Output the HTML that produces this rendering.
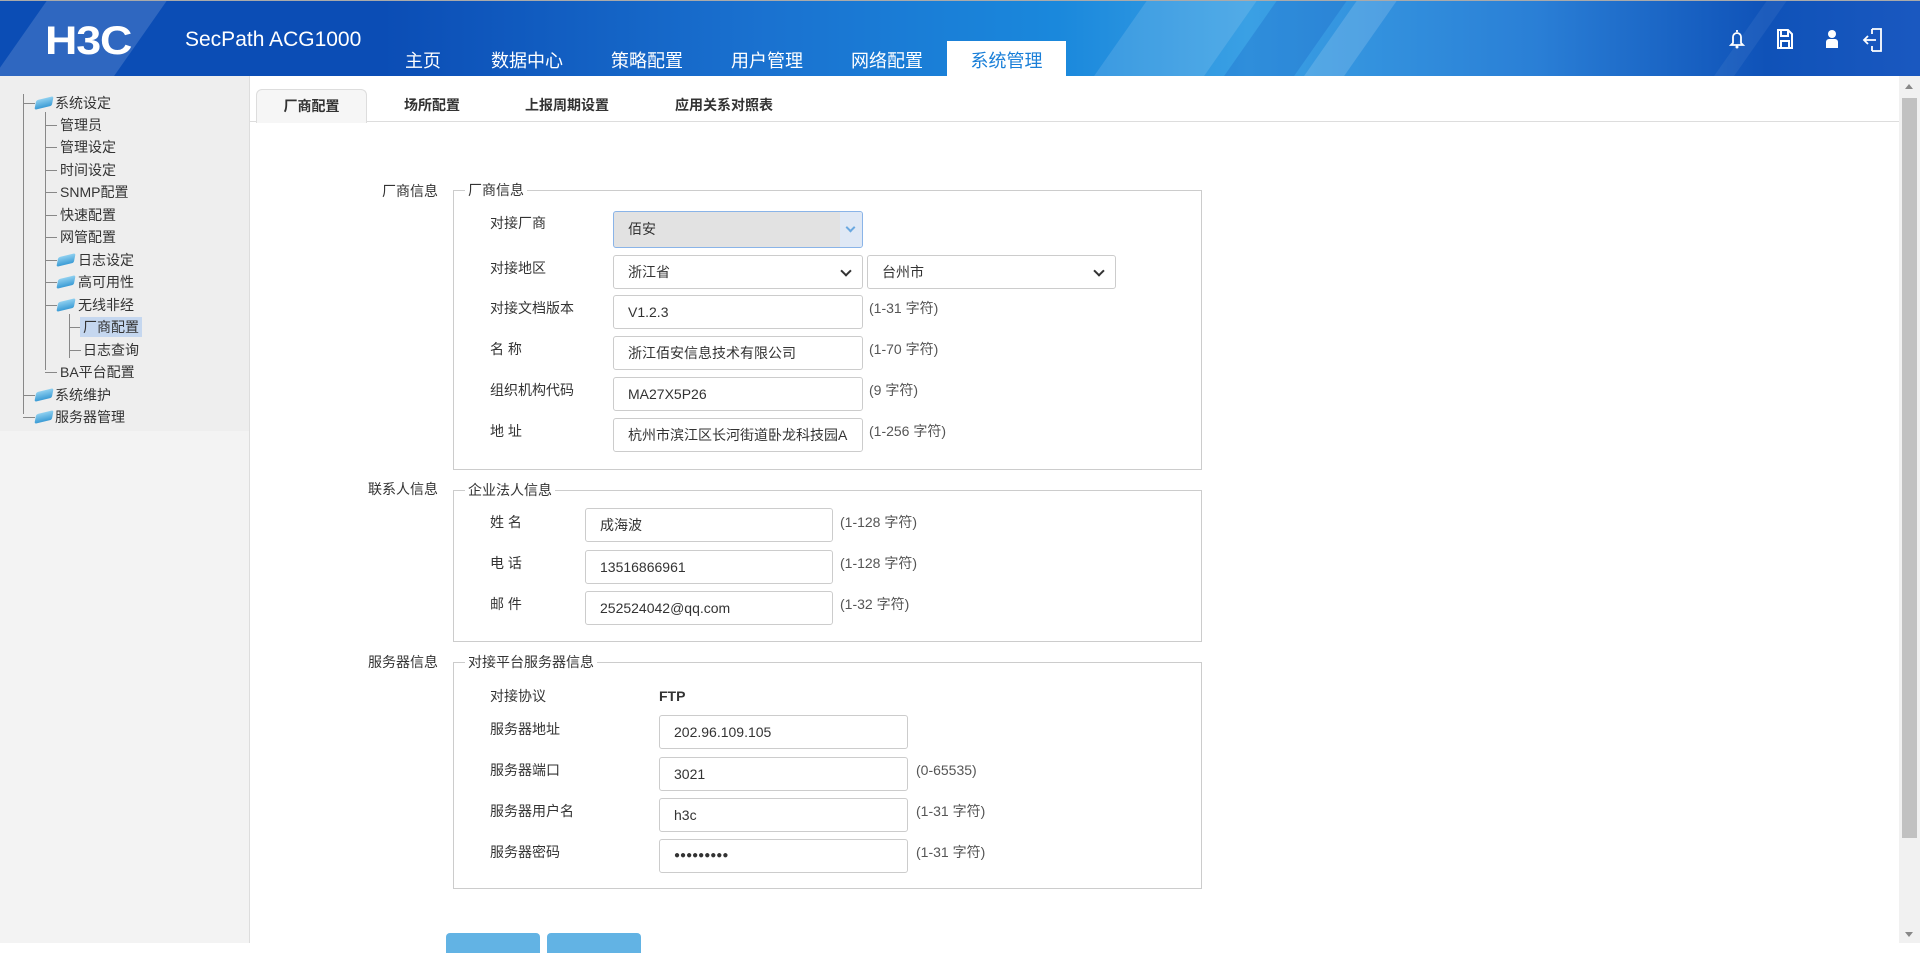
<!DOCTYPE html>
<html><head><meta charset="utf-8">
<style>
*{box-sizing:border-box;margin:0;padding:0}
body{width:1920px;height:943px;overflow:hidden;position:relative;background:#fff;font-family:"Liberation Sans","Noto Sans CJK SC",sans-serif;color:#333;font-size:14px}
.hdr{position:absolute;left:0;top:0;width:1920px;height:76px;border-top:1px solid #aaa;
background:linear-gradient(90deg,#0b4db5 0%,#0b4db5 20%,#1a72d0 40%,#1a88dc 55%,#3aa0e4 65%,#2a7fd6 80%,#0f52b8 92%,#1a58c0 100%);overflow:hidden}
.stripe{position:absolute;top:0;height:76px;transform:skewX(-35deg);background:rgba(255,255,255,.12)}
.logo{position:absolute;left:45px;top:20px;color:#fff;font:bold 40px "Liberation Sans",sans-serif;letter-spacing:-1px;transform:scaleX(1.12);transform-origin:left;line-height:40px}
.prod{position:absolute;left:185px;top:27px;color:#fff;font-size:21px}
.nav{position:absolute;top:46px;color:#fff;font-size:18px}
.act{position:absolute;left:947px;top:40px;width:119px;height:36px;background:#fff;color:#1a7fd8;font-size:18px;text-align:center;line-height:36px;padding-top:2px}
.ic{position:absolute;top:27px}
.side{position:absolute;left:0;top:76px;width:250px;height:867px;background:#f3f3f3;border-right:1px solid #ddd}
.side .top{position:absolute;left:0;top:0;width:249px;height:355px;background:#eeeeee}
.ti{position:absolute;font-size:14px;color:#333;line-height:18px;white-space:nowrap}
.vl{position:absolute;border-left:1px solid #888}
.hl{position:absolute;border-top:1px solid #888;width:12px}
.fold{position:absolute;width:16px;height:10px;background:linear-gradient(#8fd0f0,#3a9bd5);border-radius:2px;transform:skewX(-25deg) rotate(-15deg)}
.tabs{position:absolute;left:250px;top:89px;width:1649px;height:33px;border-bottom:1px solid #ddd}
.tab{position:absolute;top:0;height:33px;line-height:33px;font-weight:bold;font-size:14px;color:#333;text-align:center}
.tab.on{background:#f6f6f6;border:1px solid #ddd;border-bottom:none;border-radius:6px 6px 0 0;height:34px}
.fs{position:absolute;left:453px;width:749px;border:1px solid #ccc}
.lg{position:absolute;background:#fff;padding:0 3px;font-size:14px;top:-10px;left:11px;line-height:18px}
.ll{position:absolute;font-size:14px;line-height:18px;text-align:right;width:120px}
.lab{position:absolute;font-size:14px;line-height:18px}
.in{position:absolute;height:34px;border:1px solid #ccc;border-radius:3px;background:#fff;font-size:14px;line-height:32px;padding-left:14px;color:#333;white-space:nowrap;overflow:hidden}
.hint{position:absolute;font-size:14px;line-height:18px;color:#555}
.sel::after{content:"";position:absolute;right:12px;top:11px;width:6px;height:6px;border-right:2px solid #333;border-bottom:2px solid #333;transform:rotate(45deg)}
.sb{position:absolute;left:1899px;top:76px;width:21px;height:867px;background:#f1f1f1}
.btn{position:absolute;top:933px;height:20px;width:94px;background:#62b3e4;border-radius:4px 4px 0 0}
</style></head><body>
<div class="hdr">
<div class="stripe" style="left:20px;width:120px;background:rgba(255,255,255,.15)"></div>
<div class="stripe" style="left:1120px;width:110px;background:rgba(255,255,255,.12)"></div>
<div class="stripe" style="left:1250px;width:70px;background:rgba(0,60,180,.18)"></div>
<div class="stripe" style="left:1330px;width:40px;background:rgba(255,255,255,.15)"></div>
<div class="stripe" style="left:1740px;width:20px;background:rgba(255,255,255,.06)"></div>
<div class="logo">H3C</div>
<div class="prod">SecPath ACG1000</div>
<div class="nav" style="left:405px">主页</div>
<div class="nav" style="left:491px">数据中心</div>
<div class="nav" style="left:611px">策略配置</div>
<div class="nav" style="left:731px">用户管理</div>
<div class="nav" style="left:851px">网络配置</div>
<div class="act">系统管理</div>
<svg class="ic" style="left:1728px" width="18" height="22" viewBox="0 0 18 22"><path d="M9 2v2M5 15V9a4 4 0 0 1 8 0v6l2 2H3z" fill="none" stroke="#fff" stroke-width="1.8"/><circle cx="9" cy="19" r="1.5" fill="#fff"/></svg>
<svg class="ic" style="left:1776px" width="18" height="22" viewBox="0 0 18 22"><path d="M2 2h10l4 4v14H2z M5 2v6h7V2 M5 20v-7h8v7" fill="none" stroke="#fff" stroke-width="2"/></svg>
<svg class="ic" style="left:1823px" width="18" height="22" viewBox="0 0 18 22"><circle cx="9" cy="6" r="4" fill="#fff"/><path d="M3 20v-6a3 3 0 0 1 3-3h6a3 3 0 0 1 3 3v6z" fill="#fff"/></svg>
<svg class="ic" style="left:1862px" width="22" height="24" viewBox="0 0 22 24"><path d="M10 1h9v22h-9M10 1v5M10 23v-5M14 12H2M6 8l-4 4 4 4" fill="none" stroke="#fff" stroke-width="1.8"/></svg>
</div>

<div class="side"><div class="top"></div>
<div class="vl" style="left:23px;top:18px;height:320px"></div>
<div class="vl" style="left:45px;top:36px;height:258px"></div>
<div class="vl" style="left:69px;top:238px;height:44px"></div>
</div>
<div class="hl" style="left:23px;top:103px"></div><div class="fold" style="left:36px;top:98px"></div><div class="ti" style="left:55px;top:94px">系统设定</div>
<div class="hl" style="left:45px;top:125px"></div><div class="ti" style="left:60px;top:116px">管理员</div>
<div class="hl" style="left:45px;top:147px"></div><div class="ti" style="left:60px;top:138px">管理设定</div>
<div class="hl" style="left:45px;top:170px"></div><div class="ti" style="left:60px;top:161px">时间设定</div>
<div class="hl" style="left:45px;top:192px"></div><div class="ti" style="left:60px;top:183px">SNMP配置</div>
<div class="hl" style="left:45px;top:215px"></div><div class="ti" style="left:60px;top:206px">快速配置</div>
<div class="hl" style="left:45px;top:237px"></div><div class="ti" style="left:60px;top:228px">网管配置</div>
<div class="hl" style="left:45px;top:260px"></div><div class="fold" style="left:58px;top:255px"></div><div class="ti" style="left:78px;top:251px">日志设定</div>
<div class="hl" style="left:45px;top:282px"></div><div class="fold" style="left:58px;top:277px"></div><div class="ti" style="left:78px;top:273px">高可用性</div>
<div class="hl" style="left:45px;top:305px"></div><div class="fold" style="left:58px;top:300px"></div><div class="ti" style="left:78px;top:296px">无线非经</div>
<div class="hl" style="left:69px;top:327px"></div><div class="ti" style="left:80px;top:317px;background:#c5d7ef;padding:1px 3px">厂商配置</div>
<div class="hl" style="left:69px;top:350px"></div><div class="ti" style="left:83px;top:341px">日志查询</div>
<div class="hl" style="left:45px;top:372px"></div><div class="ti" style="left:60px;top:363px">BA平台配置</div>
<div class="hl" style="left:23px;top:395px"></div><div class="fold" style="left:36px;top:390px"></div><div class="ti" style="left:55px;top:386px">系统维护</div>
<div class="hl" style="left:23px;top:417px"></div><div class="fold" style="left:36px;top:412px"></div><div class="ti" style="left:55px;top:408px">服务器管理</div>

<div class="tabs">
<div class="tab on" style="left:6px;width:111px">厂商配置</div>
<div class="tab" style="left:132px;width:100px">场所配置</div>
<div class="tab" style="left:262px;width:110px">上报周期设置</div>
<div class="tab" style="left:412px;width:124px">应用关系对照表</div>
</div>

<div class="ll" style="left:318px;top:182px">厂商信息</div>
<div class="fs" style="top:190px;height:280px"><div class="lg">厂商信息</div></div>
<div class="lab" style="left:490px;top:214px">对接厂商</div>
<div class="in" style="left:613px;top:211px;width:250px;height:37px;background:#e2e2e2;border-color:#8ab4e8;line-height:35px">佰安<span style="position:absolute;right:0;top:0;width:22px;height:35px;background:#dfe8f5"></span><span style="position:absolute;right:8px;top:12px;width:7px;height:7px;border-right:2px solid #6aa8e0;border-bottom:2px solid #6aa8e0;transform:rotate(45deg)"></span></div>
<div class="lab" style="left:490px;top:259px">对接地区</div>
<div class="in sel" style="left:613px;top:255px;width:250px">浙江省</div>
<div class="in sel" style="left:867px;top:255px;width:249px">台州市</div>
<div class="lab" style="left:490px;top:299px">对接文档版本</div>
<div class="in" style="left:613px;top:295px;width:250px">V1.2.3</div><div class="hint" style="left:869px;top:299px">(1-31 字符)</div>
<div class="lab" style="left:490px;top:340px">名 称</div>
<div class="in" style="left:613px;top:336px;width:250px">浙江佰安信息技术有限公司</div><div class="hint" style="left:869px;top:340px">(1-70 字符)</div>
<div class="lab" style="left:490px;top:381px">组织机构代码</div>
<div class="in" style="left:613px;top:377px;width:250px">MA27X5P26</div><div class="hint" style="left:869px;top:381px">(9 字符)</div>
<div class="lab" style="left:490px;top:422px">地 址</div>
<div class="in" style="left:613px;top:418px;width:250px;padding-left:14px">杭州市滨江区长河街道卧龙科技园A</div><div class="hint" style="left:869px;top:422px">(1-256 字符)</div>

<div class="ll" style="left:318px;top:480px">联系人信息</div>
<div class="fs" style="top:490px;height:152px"><div class="lg">企业法人信息</div></div>
<div class="lab" style="left:490px;top:513px">姓 名</div>
<div class="in" style="left:585px;top:508px;width:248px">成海波</div><div class="hint" style="left:840px;top:513px">(1-128 字符)</div>
<div class="lab" style="left:490px;top:554px">电 话</div>
<div class="in" style="left:585px;top:550px;width:248px">13516866961</div><div class="hint" style="left:840px;top:554px">(1-128 字符)</div>
<div class="lab" style="left:490px;top:595px">邮 件</div>
<div class="in" style="left:585px;top:591px;width:248px">252524042@qq.com</div><div class="hint" style="left:840px;top:595px">(1-32 字符)</div>

<div class="ll" style="left:318px;top:653px">服务器信息</div>
<div class="fs" style="top:662px;height:227px"><div class="lg">对接平台服务器信息</div></div>
<div class="lab" style="left:490px;top:687px">对接协议</div>
<div class="lab" style="left:659px;top:687px;font-weight:bold">FTP</div>
<div class="lab" style="left:490px;top:720px">服务器地址</div>
<div class="in" style="left:659px;top:715px;width:249px">202.96.109.105</div>
<div class="lab" style="left:490px;top:761px">服务器端口</div>
<div class="in" style="left:659px;top:757px;width:249px">3021</div><div class="hint" style="left:916px;top:761px">(0-65535)</div>
<div class="lab" style="left:490px;top:802px">服务器用户名</div>
<div class="in" style="left:659px;top:798px;width:249px">h3c</div><div class="hint" style="left:916px;top:802px">(1-31 字符)</div>
<div class="lab" style="left:490px;top:843px">服务器密码</div>
<div class="in" style="left:659px;top:839px;width:249px;font-size:10px">●●●●●●●●●</div><div class="hint" style="left:916px;top:843px">(1-31 字符)</div>

<div class="btn" style="left:446px"></div>
<div class="btn" style="left:547px"></div>

<div class="sb">
<div style="position:absolute;left:6px;top:8px;border:4px solid transparent;border-bottom:5px solid #888;border-top:none"></div>
<div style="position:absolute;left:3px;top:22px;width:15px;height:740px;background:#c1c1c1"></div>
<div style="position:absolute;left:6px;top:856px;border:4px solid transparent;border-top:5px solid #888;border-bottom:none"></div>
</div>
</body></html>
